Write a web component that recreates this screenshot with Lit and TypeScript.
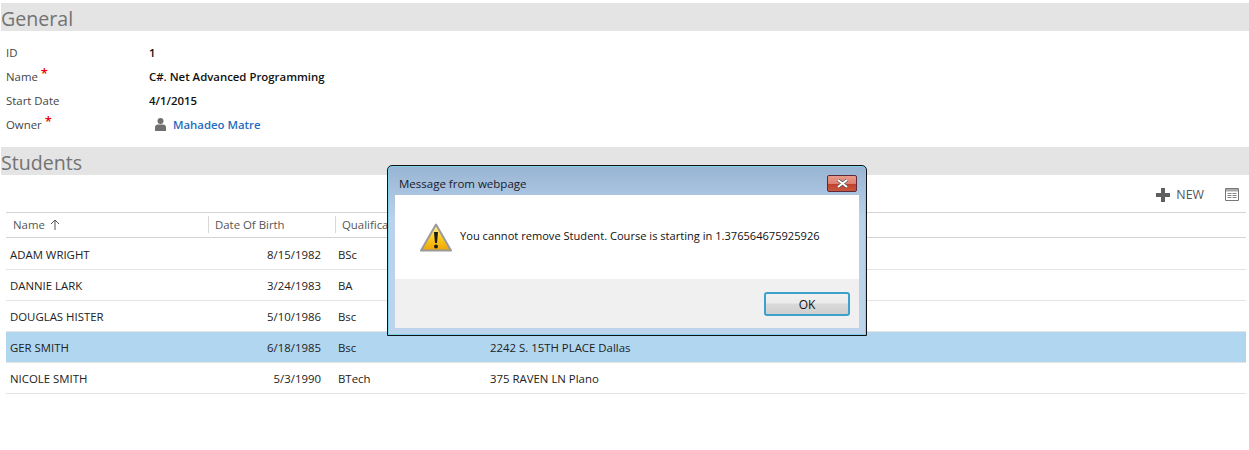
import { LitElement, html, css } from 'lit';
import { customElement } from 'lit/decorators.js';

const students = [
  { name: 'ADAM WRIGHT', dob: '8/15/1982', qual: 'BSc', address: '' },
  { name: 'DANNIE LARK', dob: '3/24/1983', qual: 'BA', address: '' },
  { name: 'DOUGLAS HISTER', dob: '5/10/1986', qual: 'Bsc', address: '' },
  { name: 'GER SMITH', dob: '6/18/1985', qual: 'Bsc', address: '2242 S. 15TH PLACE Dallas', selected: true },
  { name: 'NICOLE SMITH', dob: '5/3/1990', qual: 'BTech', address: '375 RAVEN LN Plano' },
];

@customElement('app-root')
export class AppRoot extends LitElement {
  static styles = css`
    :host {
      display: block;
      position: relative;
      height: 450px;
      overflow: hidden;
      background: #fff;
      padding-top: 3px;
      box-sizing: border-box;
      font-family: 'Open Sans', 'Liberation Sans', sans-serif;
      font-size: 11.4px;
      color: #222;
    }
    .band {
      margin-left: 1px;
      height: 28px;
      background: #e4e4e4;
      color: #737373;
      font-size: 19.6px;
      line-height: 31px;
      overflow: hidden;
    }
    .form {
      padding: 9px 0 11px 6px;
    }
    .field {
      display: flex;
      height: 24px;
      align-items: center;
    }
    .label {
      width: 143px;
      color: #444;
      line-height: 16px;
      padding-top: 2px;
    }
    .req {
      color: #f00000;
      font-size: 13px;
      font-weight: 600;
      line-height: 0;
      position: relative;
      top: -3px;
      margin-left: 3px;
    }
    .value {
      font-weight: 600;
      color: #111;
    }
    .owner {
      display: flex;
      align-items: center;
      gap: 7px;
      padding-left: 6px;
      color: #1f6cc0;
      font-weight: 600;
    }
    .toolbar {
      height: 37px;
      box-sizing: border-box;
      display: flex;
      justify-content: flex-end;
      align-items: center;
      padding: 2px 10px 0 0;
    }
    .new {
      display: flex;
      align-items: center;
      gap: 6px;
      color: #555;
      font-size: 12.4px;
      margin-right: 21px;
    }
    .grid {
      margin-left: 6px;
      width: 1240px;
    }
    .head {
      display: flex;
      height: 22px;
      padding-bottom: 2px;
      margin-bottom: 1px;
      align-items: center;
      border-top: 1px solid #d4d4d4;
      border-bottom: 1px solid #d4d4d4;
      color: #555;
    }
    .head span {
      display: flex;
      align-items: center;
      gap: 5px;
    }
    .h-name {
      width: 196px;
      padding-left: 7px;
      box-sizing: border-box;
    }
    .h-dob {
      width: 127px;
      height: 17px;
      padding-left: 6px;
      border-left: 1px solid #d8d8d8;
      box-sizing: border-box;
      margin-left: 6px;
    }
    .h-qual {
      height: 17px;
      padding-left: 6px;
      border-left: 1px solid #d8d8d8;
    }
    .row {
      display: grid;
      grid-template-columns: 207px 108px 152px 1fr;
      column-gap: 0;
      height: 30px;
      align-items: center;
      border-bottom: 1px solid #e4e4e4;
      color: #222;
    }
    .row.selected {
      background: #b1d6f0;
    }
    .row > div:first-child {
      padding-left: 4px;
    }
    .dob {
      text-align: right;
    }
    .qual {
      padding-left: 17px;
    }
    .addr {
      padding-left: 17px;
    }
    .dialog {
      position: absolute;
      left: 387px;
      top: 165px;
      width: 480px;
      height: 171px;
      box-sizing: border-box;
      border: 1px solid #111;
      border-radius: 5px 5px 0 0;
      box-shadow: inset 0 0 0 1px #7fd0e8;
      background: linear-gradient(#97b4d3, #b9d1ea 30%, #bcd4ec);
      padding: 1px 7px 7px 7px;
      display: flex;
      flex-direction: column;
      font-family: 'Open Sans', 'Liberation Sans', sans-serif;
    }
    .titlebar {
      height: 28px;
      flex: none;
      box-sizing: border-box;
      padding: 4px 2px 0 4px;
      display: flex;
      align-items: center;
      justify-content: space-between;
      color: #1a1a2a;
      font-size: 11.5px;
    }
    .close {
      width: 30px;
      height: 17px;
      box-sizing: border-box;
      border: 1px solid #5e2a3a;
      border-radius: 2px;
      background: linear-gradient(#e99a8a, #dd8070 50%, #c0402a 52%, #c9573f);
      display: flex;
      align-items: center;
      justify-content: center;
    }
    .client {
      flex: 1;
      background: #fff;
      display: flex;
      flex-direction: column;
    }
    .message {
      height: 84px;
      box-sizing: border-box;
      padding: 28px 0 0 25px;
      display: flex;
      align-items: flex-start;
      gap: 8px;
      color: #111;
      font-size: 11.1px;
    }
    .message span {
      line-height: 25px;
    }
    .actions {
      flex: 1;
      background: #f0f0f0;
      display: flex;
      justify-content: flex-end;
      align-items: flex-start;
      padding: 13px 9px 0 0;
    }
    .ok {
      width: 86px;
      height: 24px;
      box-sizing: border-box;
      border: 2px solid #3ea0cf;
      border-radius: 3px;
      background: linear-gradient(#f1f1f1, #ebebeb 45%, #d9d9d9 50%, #cfcfcf);
      font: inherit;
      font-size: 12px;
      color: #111;
      padding: 0;
    }
  `;

  render() {
    return html`
      <div class="band">General</div>
      <div class="form">
        <div class="field"><div class="label">ID</div><div class="value">1</div></div>
        <div class="field">
          <div class="label">Name<span class="req">*</span></div>
          <div class="value">C#. Net Advanced Programming</div>
        </div>
        <div class="field"><div class="label">Start Date</div><div class="value">4/1/2015</div></div>
        <div class="field">
          <div class="label">Owner<span class="req">*</span></div>
          <div class="owner">
            <svg width="11" height="13" viewBox="0 0 11 13">
              <circle cx="5.5" cy="3" r="3" fill="#6f6f6f" />
              <path d="M0 13V9.5C0 7.5 1.5 6.6 3 6.6h5c1.5 0 3 .9 3 2.9V13z" fill="#6f6f6f" />
            </svg>
            Mahadeo Matre
          </div>
        </div>
      </div>
      <div class="band">Students</div>
      <div class="toolbar">
        <div class="new">
          <svg width="14" height="14" viewBox="0 0 14 14">
            <path d="M5 0h4v5h5v4H9v5H5V9H0V5h5z" fill="#5f5f5f" />
          </svg>
          NEW
        </div>
        <svg width="14" height="13" viewBox="0 0 14 13">
          <path d="M.5.5h13v12H.5z" fill="#fff" stroke="#777" />
          <path d="M1 1h12v2.5H1z" fill="#aaa" />
          <path d="M2.5 5.5h4M7.5 5.5h4M2.5 7.5h4M7.5 7.5h4M2.5 9.5h4M7.5 9.5h4" stroke="#888" fill="none" />
        </svg>
      </div>
      <div class="grid">
        <div class="head">
          <span class="h-name">Name
            <svg width="10" height="11" viewBox="0 0 10 11">
              <path d="M5 11V1M1 5l4-4 4 4" fill="none" stroke="#555" />
            </svg>
          </span>
          <span class="h-dob">Date Of Birth</span>
          <span class="h-qual">Qualification</span>
        </div>
        ${students.map(
          (s) => html`
            <div class="row ${s.selected ? 'selected' : ''}">
              <div>${s.name}</div>
              <div class="dob">${s.dob}</div>
              <div class="qual">${s.qual}</div>
              <div class="addr">${s.address}</div>
            </div>
          `
        )}
      </div>
      <div class="dialog">
        <div class="titlebar">
          Message from webpage
          <div class="close">
            <svg width="13" height="9" viewBox="0 0 13 9">
              <path d="M2 1l9 7M11 1l-9 7" stroke="#555" stroke-width="3.4" />
              <path d="M2 1l9 7M11 1l-9 7" stroke="#fff" stroke-width="2" />
            </svg>
          </div>
        </div>
        <div class="client">
          <div class="message">
            <svg width="32" height="30" viewBox="0 0 32 30">
              <defs>
                <linearGradient id="warn" x1="0" y1="0" x2="0" y2="1">
                  <stop offset="0" stop-color="#fff3a0" />
                  <stop offset="0.55" stop-color="#fcc91c" />
                  <stop offset="1" stop-color="#eda308" />
                </linearGradient>
              </defs>
              <path d="M16 1.5 31 27.5H1z" fill="url(#warn)" stroke="#9a9a9a" stroke-width="2" stroke-linejoin="round" />
              <path d="M14 9h4l-1 11h-2z" fill="#1a1a1a" />
              <circle cx="16" cy="23.5" r="1.9" fill="#1a1a1a" />
            </svg>
            <span>You cannot remove Student. Course is starting in 1.376564675925926</span>
          </div>
          <div class="actions"><button class="ok">OK</button></div>
        </div>
      </div>
    `;
  }
}
